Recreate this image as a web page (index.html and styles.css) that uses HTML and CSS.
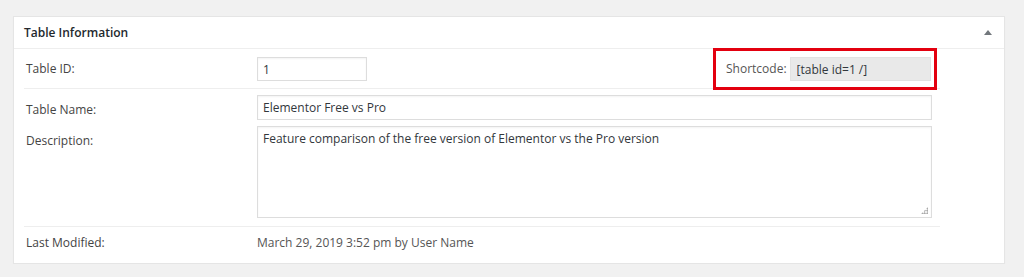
FILE: index.html
```html
<!DOCTYPE html>
<html lang="en">
<head>
  <meta charset="UTF-8">
  <title>Table Information</title>
  <link rel="stylesheet" href="styles.css">
</head>
<body>
  <div class="postbox">
    <div class="postbox-header">
      <h2>Table Information</h2>
      <span class="toggle-indicator"></span>
    </div>

    <div class="inside">
      <div class="form-row row-id">
        <label class="field-label" for="table-id">Table ID:</label>
        <input type="text" id="table-id" class="input-id" value="1">
        <div class="shortcode-box">
          <label for="table-shortcode">Shortcode:</label>
          <input type="text" id="table-shortcode" class="input-shortcode" value="[table id=1 /]" readonly>
        </div>
      </div>

      <div class="form-row row-name">
        <label class="field-label" for="table-name">Table Name:</label>
        <input type="text" id="table-name" class="input-wide" value="Elementor Free vs Pro">
      </div>

      <div class="form-row row-desc">
        <label class="field-label" for="table-description">Description:</label>
        <div class="textarea-wrap">
          <textarea id="table-description" class="input-wide">Feature comparison of the free version of Elementor vs the Pro version</textarea>
        </div>
      </div>

      <div class="form-row row-modified">
        <span class="field-label">Last Modified:</span>
        <span class="modified-value">March 29, 2019 3:52 pm by User Name</span>
      </div>
    </div>
  </div>
</body>
</html>
```

FILE: styles.css
```css
* {
  margin: 0;
  padding: 0;
  box-sizing: border-box;
}

body {
  background: #f1f1f1;
  font-family: 'Open Sans', 'Noto Sans', sans-serif;
  font-size: 12px;
  line-height: 20px;
  color: #444;
  padding: 16px 19px 0 13px;
}

.postbox {
  background: #fff;
  border: 1px solid #e5e5e5;
  box-shadow: 0 1px 1px rgba(0, 0, 0, 0.04);
}

.postbox-header {
  display: flex;
  align-items: center;
  height: 32px;
  border-bottom: 1px solid #eee;
  padding: 0 10px;
}

.postbox-header h2 {
  font-size: 12px;
  font-weight: 600;
  color: #23282d;
  flex: 1;
}

.toggle-indicator {
  width: 0;
  height: 0;
  border-left: 4px solid transparent;
  border-right: 4px solid transparent;
  border-bottom: 5px solid #72777c;
  margin-right: 2px;
}

.inside {
  padding: 0 10px 10px;
  width: 936px;
}

.form-row {
  display: flex;
  align-items: flex-start;
}

.field-label {
  width: 233px;
  flex-shrink: 0;
  padding-left: 2px;
  color: #444;
}

input,
textarea {
  font-family: inherit;
  font-size: 12px;
  color: #32373c;
  border: 1px solid #ddd;
  box-shadow: inset 0 1px 2px rgba(0, 0, 0, 0.05);
  background: #fff;
  padding: 0 5px;
  outline: none;
}

.row-id {
  align-items: center;
  padding: 8px 0 7px;
  border-bottom: 1px solid #eee;
}

.input-id {
  width: 110px;
  height: 24px;
}

.shortcode-box {
  display: flex;
  align-items: center;
  height: 42px;
  width: 224px;
  margin: -9px 3px -9px auto;
  border: 3px solid #e3000f;
  padding: 0 3px 0 10px;
}

.shortcode-box label {
  color: #555;
  margin-right: 3px;
  white-space: nowrap;
}

.input-shortcode {
  flex: 1;
  min-width: 0;
  height: 24px;
  background: #e9e9e9;
  border-color: #e2e2e2;
  box-shadow: none;
  padding-left: 6px;
}

.row-name {
  padding: 6px 0 3px;
}

.row-name .field-label {
  padding-top: 5px;
}

.input-wide {
  width: 675px;
}

.row-name .input-wide {
  height: 25px;
}

.row-desc {
  padding: 3px 0 8px;
  border-bottom: 1px solid #eee;
}

.row-desc .field-label {
  padding-top: 5px;
}

.textarea-wrap {
  position: relative;
}

.textarea-wrap textarea {
  display: block;
  height: 92px;
  resize: none;
  padding: 3px 5px;
}

/* little dotted grip like the browser resize handle */
.textarea-wrap::after {
  content: "";
  position: absolute;
  right: 4px;
  bottom: 4px;
  width: 7px;
  height: 7px;
  background:
    radial-gradient(circle, #999 0.8px, transparent 1px) 0 0 / 2.5px 2.5px;
  clip-path: polygon(100% 0, 100% 100%, 0 100%);
}

.row-modified {
  padding-top: 6px;
}

.modified-value {
  color: #555;
}
```
